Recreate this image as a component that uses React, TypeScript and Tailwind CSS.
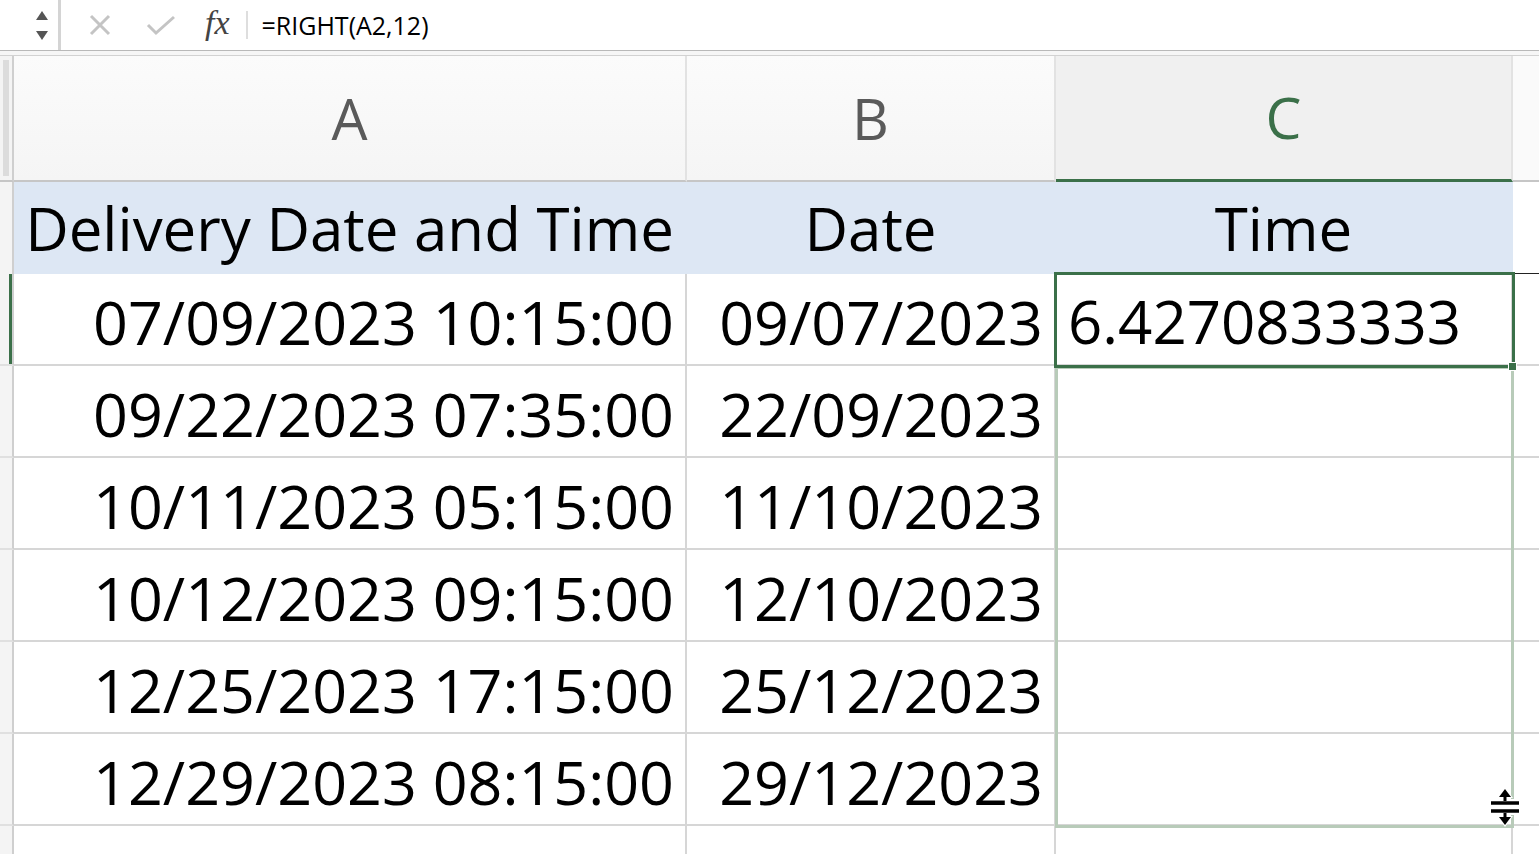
import React from "react";

const FONT = { fontFamily: '"Open Sans", "Noto Sans", sans-serif' };

const rows: [string, string, string][] = [
  ["07/09/2023 10:15:00", "09/07/2023", "6.4270833333"],
  ["09/22/2023 07:35:00", "22/09/2023", ""],
  ["10/11/2023 05:15:00", "11/10/2023", ""],
  ["10/12/2023 09:15:00", "12/10/2023", ""],
  ["12/25/2023 17:15:00", "25/12/2023", ""],
  ["12/29/2023 08:15:00", "29/12/2023", ""],
];

function FormulaBar() {
  return (
    <div className="h-[51px] flex items-stretch bg-white border-b border-[#b9b9b9]">
      <div className="w-[61px] shrink-0 relative border-r-[3px] border-[#d4d4d4]">
        <svg className="absolute left-[35px] top-[9px]" width="14" height="34" viewBox="0 0 14 34">
          <polygon points="7,2 13,11 1,11" fill="#555" />
          <polygon points="1,22 13,22 7,31" fill="#555" />
        </svg>
      </div>
      <div className="flex items-center">
        <svg className="ml-[28px]" width="22" height="22" viewBox="0 0 22 22">
          <path d="M2 2 L20 20 M20 2 L2 20" stroke="#c4c4c4" strokeWidth="3" />
        </svg>
        <svg className="ml-[35px]" width="30" height="22" viewBox="0 0 30 22">
          <path d="M2 11 L10 19 L28 3" stroke="#c4c4c4" strokeWidth="3" fill="none" />
        </svg>
        <span
          className="ml-[29px] text-[34px] italic text-[#444] leading-none pb-[4px]"
          style={{ fontFamily: '"Liberation Serif", "DejaVu Serif", serif' }}
        >
          fx
        </span>
        <div className="ml-[16px] w-[2px] h-[28px] bg-[#dedede]" />
        <span className="ml-[14px] text-[25px] text-black leading-none" style={FONT}>
          =RIGHT(A2,12)
        </span>
      </div>
    </div>
  );
}

function ColumnHeaders() {
  return (
    <div className="flex h-[126px]">
      <div className="w-[14px] shrink-0 bg-[#f4f4f4] border-r-2 border-[#cfcfcf] border-b-2 border-b-[#c6c6c6] pt-[4px] pl-[3px]">
        <div className="w-[6px] h-[116px] bg-[#dcdcdc]" />
      </div>
      <div className="w-[673px] shrink-0 flex items-center justify-center bg-gradient-to-b from-[#fbfbfb] to-[#f5f5f5] border-r-2 border-[#e2e2e2] border-b-2 border-b-[#c6c6c6]">
        <span className="text-[57px] text-[#5a5a5a] leading-none" style={FONT}>A</span>
      </div>
      <div className="w-[369px] shrink-0 flex items-center justify-center bg-gradient-to-b from-[#fbfbfb] to-[#f5f5f5] border-r-2 border-[#e2e2e2] border-b-2 border-b-[#c6c6c6]">
        <span className="text-[57px] text-[#5a5a5a] leading-none" style={FONT}>B</span>
      </div>
      <div className="w-[457px] shrink-0 flex items-center justify-center bg-[#f0f0f0] border-r-2 border-[#e2e2e2] border-b-[3px] border-b-[#3b7049]">
        <span className="text-[57px] text-[#3b7049] leading-none" style={FONT}>C</span>
      </div>
      <div className="flex-1 bg-[#fafafa] border-b-2 border-b-[#c6c6c6]" />
    </div>
  );
}

function HeaderRow() {
  return (
    <div className="flex h-[92px]">
      <div className="w-[14px] shrink-0 bg-[#f4f4f4] border-r-2 border-[#cfcfcf]" />
      <div className="w-[673px] shrink-0 flex items-center justify-center bg-[#dde7f4] border-r-2 border-[#dde7f4]">
        <span className="text-[60px] text-black leading-none" style={FONT}>Delivery Date and Time</span>
      </div>
      <div className="w-[369px] shrink-0 flex items-center justify-center bg-[#dde7f4] border-r-2 border-[#dde7f4]">
        <span className="text-[60px] text-black leading-none" style={FONT}>Date</span>
      </div>
      <div className="w-[457px] shrink-0 flex items-center justify-center bg-[#dde7f4] border-r-2 border-[#dde7f4]">
        <span className="text-[60px] text-black leading-none" style={FONT}>Time</span>
      </div>
      <div className="flex-1 bg-white border-b border-[#222]" />
    </div>
  );
}

function DataRow({ a, b, c, active }: { a: string; b: string; c: string; active: boolean }) {
  return (
    <div className="flex h-[92px]">
      <div className="w-[14px] shrink-0 bg-[#f4f4f4] border-r-2 border-[#cfcfcf] border-b-2 border-b-[#e0e0e0] flex justify-end">
        {active && <div className="w-[3px] h-full bg-[#3b7049]" />}
      </div>
      <div className="w-[673px] shrink-0 flex items-center justify-end pr-[11px] pt-[4px] border-r-2 border-b-2 border-[#d6d6d6]">
        <span className="text-[61px] text-black leading-none" style={FONT}>{a}</span>
      </div>
      <div className="w-[369px] shrink-0 flex items-center justify-end pr-[11px] pt-[4px] border-r-2 border-b-2 border-[#d6d6d6]">
        <span className="text-[61px] text-black leading-none" style={FONT}>{b}</span>
      </div>
      <div className="w-[457px] shrink-0 flex items-center justify-start pl-[12px] pt-[4px] border-r-2 border-b-2 border-[#d6d6d6]">
        <span className="text-[60px] text-black leading-none" style={FONT}>{c}</span>
      </div>
      <div className="flex-1 border-b-2 border-[#d6d6d6]" />
    </div>
  );
}

export default function App() {
  return (
    <div className="w-[1539px] h-[854px] overflow-hidden bg-white relative select-none">
      <FormulaBar />
      <div className="h-[5px] bg-[#f6f6f6] border-b border-[#d2d2d2]" />
      <ColumnHeaders />
      <HeaderRow />
      {rows.map((r, i) => (
        <DataRow key={i} a={r[0]} b={r[1]} c={r[2]} active={i === 0} />
      ))}
      <div className="flex h-[40px]">
        <div className="w-[14px] shrink-0 bg-[#f4f4f4] border-r-2 border-[#cfcfcf]" />
        <div className="w-[673px] shrink-0 border-r-2 border-[#d6d6d6]" />
        <div className="w-[369px] shrink-0 border-r-2 border-[#d6d6d6]" />
        <div className="w-[457px] shrink-0 border-r-2 border-[#d6d6d6]" />
        <div className="flex-1" />
      </div>

      {/* range C3:C7 light selection border */}
      <div className="absolute left-[1055px] top-[366px] w-[459px] h-[462px] border-[3px] border-[#b8cbb9] pointer-events-none" />
      {/* active cell C2 */}
      <div className="absolute left-[1054px] top-[272px] w-[461px] h-[96px] border-[3px] border-[#3b7049] pointer-events-none" />
      {/* fill handle */}
      <div className="absolute left-[1508px] top-[362px] w-[9px] h-[9px] bg-[#3b7049] border border-white pointer-events-none" />

      {/* row resize cursor */}
      <svg className="absolute left-[1487px] top-[787px]" width="36" height="40" viewBox="0 0 36 40">
        <path d="M3 16 H33 M3 24 H33" stroke="#fff" strokeWidth="8" />
        <path d="M18 4 V36" stroke="#fff" strokeWidth="8" />
        <polygon points="18,0 26,11 10,11" fill="#fff" />
        <polygon points="18,40 26,29 10,29" fill="#fff" />
        <path d="M4 16 H32 M4 24 H32" stroke="#000" strokeWidth="3.5" />
        <path d="M18 6 V14 M18 26 V34" stroke="#000" strokeWidth="3" />
        <polygon points="18,2 24,10 12,10" fill="#000" />
        <polygon points="18,38 24,30 12,30" fill="#000" />
      </svg>
    </div>
  );
}
